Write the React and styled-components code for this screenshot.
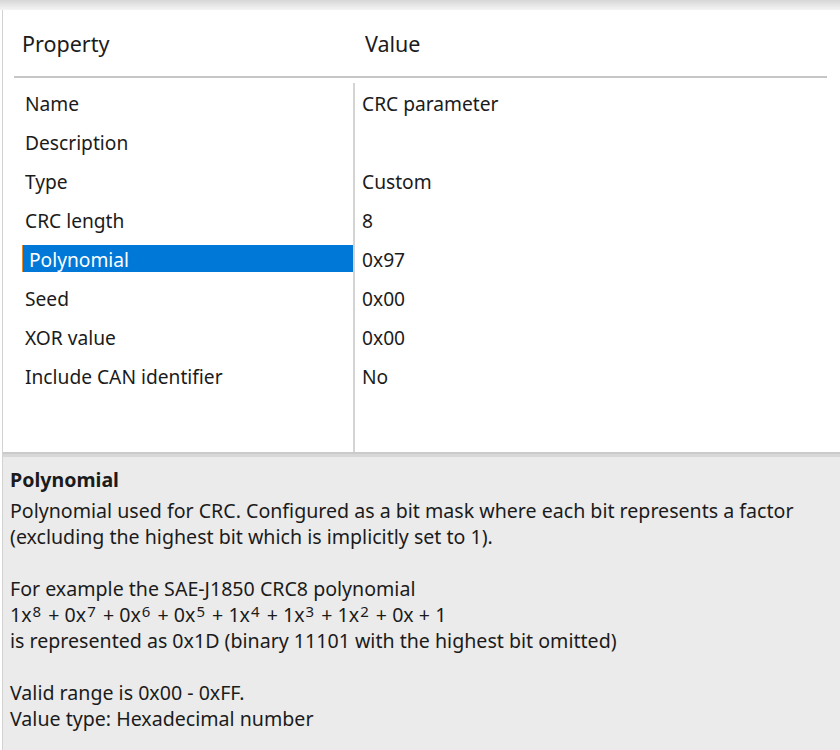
import React from "react";
import styled, { createGlobalStyle } from "styled-components";

const Global = createGlobalStyle`
  html, body { margin: 0; padding: 0; background: #ffffff; }
  body { font-family: "Noto Sans", "Open Sans", sans-serif; color: #1b1b1b; }
  * { box-sizing: border-box; }
`;

const Page = styled.div`
  width: 840px;
  height: 750px;
  display: flex;
  flex-direction: column;
  overflow: hidden;
`;

const TopShade = styled.div`
  height: 10px;
  flex: none;
  background: linear-gradient(#d6d6d6, #e6e6e6 50%, #f4f4f4);
`;

const Frame = styled.div`
  flex: 1;
  display: flex;
  flex-direction: column;
  margin-left: 2px;
  border-left: 1px solid #d2d2d2;
  min-height: 0;
`;

const ListPane = styled.div`
  height: 442px;
  flex: none;
  display: flex;
  flex-direction: column;
  background: #ffffff;
`;

const Header = styled.div`
  display: grid;
  grid-template-columns: 351px 1fr;
  margin: 0 13px 0 11px;
  padding: 20px 0 18px;
  border-bottom: 2px solid #c6c6c6;
  font-size: 21.5px;
  line-height: 28px;
  color: #1b1b1b;
`;

const HeaderCell = styled.div`
  padding-left: ${(p) => p.$indent}px;
`;

const Body = styled.div`
  flex: 1;
  display: grid;
  grid-template-columns: 352px 1fr;
  margin-top: 5px;
`;

const Column = styled.div`
  display: flex;
  flex-direction: column;
  padding-top: 1px;
  border-right: ${(p) => (p.$divider ? "2px solid #d4d4d4" : "none")};
  padding-left: ${(p) => p.$indent}px;
`;

const Cell = styled.div`
  height: 39px;
  display: flex;
  align-items: center;
  font-size: 19.2px;
  white-space: nowrap;
`;

const Label = styled.div`
  height: 27px;
  width: 100%;
  display: flex;
  align-items: center;
  padding-left: ${(p) => (p.$selected ? "6px" : "3px")};
  padding-top: ${(p) => (p.$selected ? "2px" : "0")};
  background: ${(p) => (p.$selected ? "#0078d7" : "transparent")};
  color: ${(p) => (p.$selected ? "#ffffff" : "#1b1b1b")};
  border-left: ${(p) => (p.$selected ? "1px solid #f08a24" : "none")};
  margin-top: ${(p) => (p.$selected ? "-2px" : "0")};
`;

const Splitter = styled.div`
  height: 5px;
  flex: none;
  background: #d7d7d7;
  border-top: 2px solid #cacaca;
`;

const Info = styled.div`
  flex: 1;
  background: #ebebeb;
  padding: 10px 0 0 7px;
  font-size: 19.6px;
  line-height: 26px;
  color: #1b1b1b;
`;

const InfoTitle = styled.div`
  font-weight: 700;
  margin-bottom: 5px;
`;

const Line = styled.div`
  min-height: 26px;
  white-space: nowrap;
`;

const Sup = styled.sup`
  font-size: 15px;
  line-height: 0;
  vertical-align: 5px;
  margin: 0 2px 0 1px;
`;

const rows = [
  ["Name", "CRC parameter"],
  ["Description", ""],
  ["Type", "Custom"],
  ["CRC length", "8"],
  ["Polynomial", "0x97"],
  ["Seed", "0x00"],
  ["XOR value", "0x00"],
  ["Include CAN identifier", "No"],
];

const terms = [
  ["1", "8"],
  ["0", "7"],
  ["0", "6"],
  ["0", "5"],
  ["1", "4"],
  ["1", "3"],
  ["1", "2"],
];

export default function App() {
  return (
    <Page>
      <Global />
      <TopShade />
      <Frame>
        <ListPane>
          <Header>
            <HeaderCell $indent={8}>Property</HeaderCell>
            <HeaderCell $indent={0}>Value</HeaderCell>
          </Header>
          <Body>
            <Column $divider $indent={19}>
              {rows.map(([k]) => (
                <Cell key={k}>
                  <Label $selected={k === "Polynomial"}>{k}</Label>
                </Cell>
              ))}
            </Column>
            <Column $indent={7}>
              {rows.map(([k, v]) => (
                <Cell key={k}>{v}</Cell>
              ))}
            </Column>
          </Body>
        </ListPane>
        <Splitter />
        <Info>
          <InfoTitle>Polynomial</InfoTitle>
          <Line>Polynomial used for CRC. Configured as a bit mask where each bit represents a factor</Line>
          <Line>(excluding the highest bit which is implicitly set to 1).</Line>
          <Line />
          <Line>For example the SAE-J1850 CRC8 polynomial</Line>
          <Line>
            {terms.map(([c, e]) => (
              <React.Fragment key={e}>
                {c}x<Sup>{e}</Sup>{" + "}
              </React.Fragment>
            ))}
            0x + 1
          </Line>
          <Line>is represented as 0x1D (binary 11101 with the highest bit omitted)</Line>
          <Line />
          <Line>Valid range is 0x00 - 0xFF.</Line>
          <Line>Value type: Hexadecimal number</Line>
        </Info>
      </Frame>
    </Page>
  );
}
